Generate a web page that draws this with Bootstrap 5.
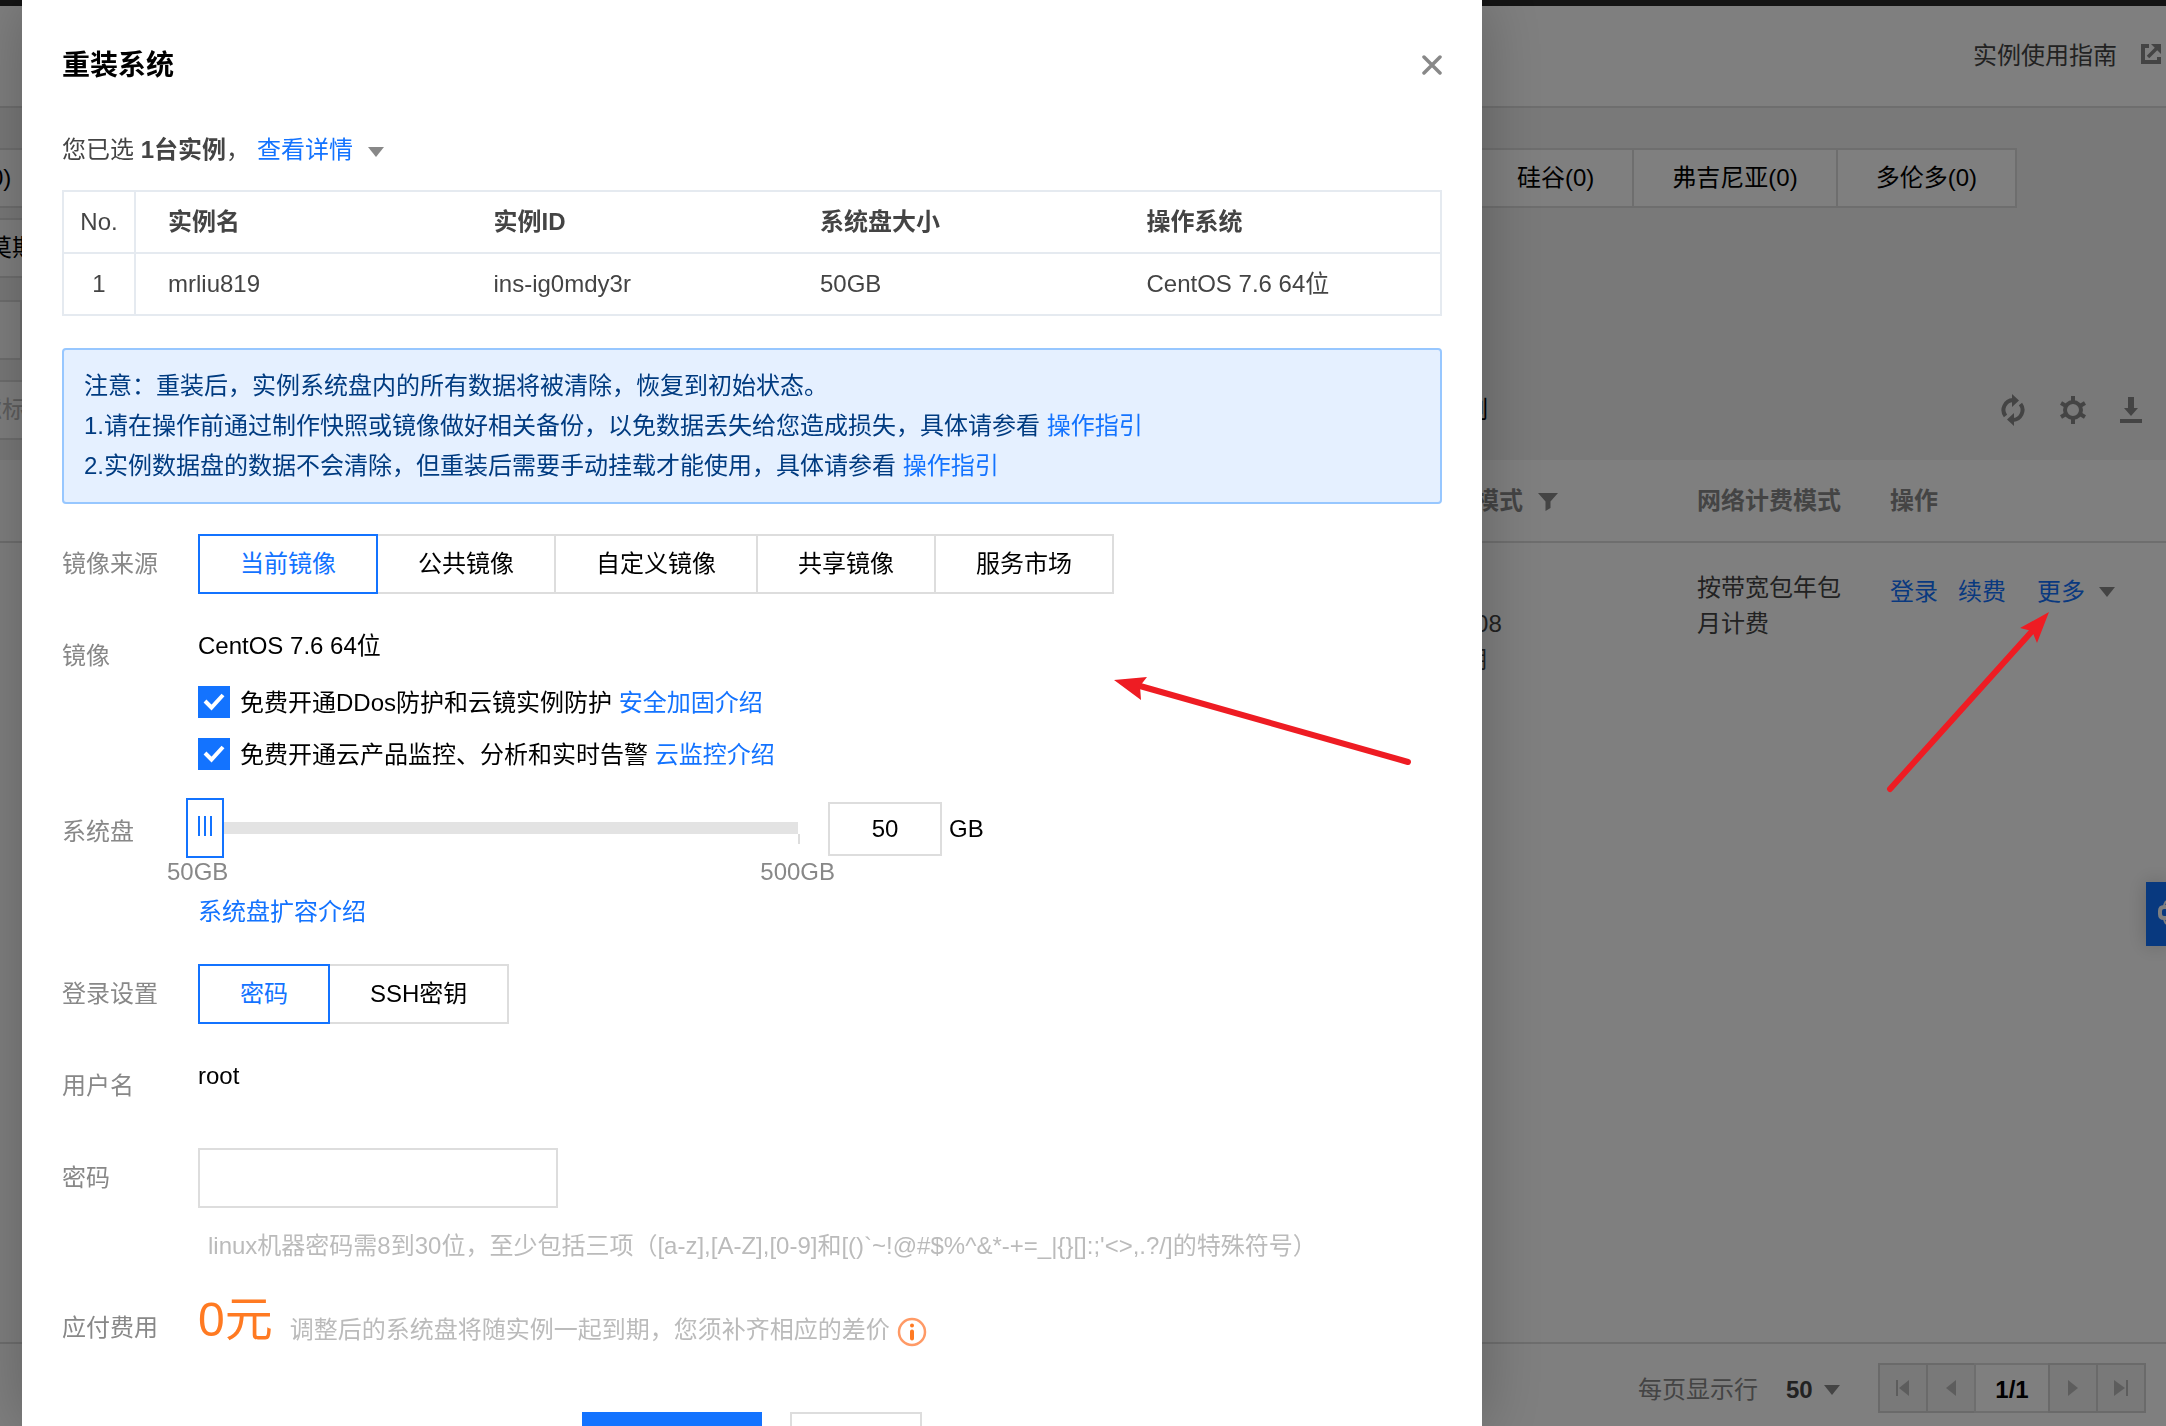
<!DOCTYPE html>
<html lang="zh-CN">
<head>
<meta charset="utf-8">
<meta name="viewport" content="width=device-width, initial-scale=1">
<title>重装系统</title>
<link rel="stylesheet" href="https://cdn.jsdelivr.net/npm/bootstrap@5.3.0/dist/css/bootstrap.min.css">
<style>
:root { --brand: #1373ff; --line: #ddd; }
body { font-family: "Liberation Sans", "Noto Sans CJK SC", sans-serif; font-size: 24px; line-height: 36px; color: #000; background: #fff; overflow: hidden; }
a { color: var(--brand); text-decoration: none; }
.btn, input, select { font-family: inherit; font-size: 24px; border-radius: 0; }
.caret-mark { display: inline-block; border: 8px solid transparent; border-top: 10px solid #888; border-bottom: 0; }

/* console page behind the dialog */
.console { height: 100vh; overflow: hidden; }
.console-bar { height: 6px; background: #282828; flex: none; }
.console-head { height: 102px; border-bottom: 2px solid var(--line); padding: 0 5px 0 0; color: #444; flex: none; }
.console-filters { background: #f2f2f2; padding: 40px 0 20px; flex: none; }
.opt-row { height: 60px; }
.opt { height: 60px; background: #fff; border: 2px solid var(--line); padding: 0 38px; color: #000; margin-left: -2px; white-space: nowrap; }
.regions { margin-right: 149px; }
.opt-zero { padding-left: 0; margin-left: -20px; }
.opt-city { padding-left: 0; margin-left: -14px; }
.opt-project { width: 24px; }
.search-box { height: 60px; border: 2px solid var(--line); padding: 0 2px; margin-left: -26px; width: 900px; background: #fff; }
.search-box::placeholder { color: #bbb; opacity: 1; }
.tool-set { width: 678px; padding-right: 24px; gap: 34px; }
.tool-set .btn { line-height: 0; }
.instances { table-layout: fixed; width: 100%; }
.instances th { height: 82px; padding: 0 20px; color: #888; border-bottom: 2px solid var(--line); }
.instances td { padding: 27px 20px; color: #444; vertical-align: top; }
.col-mode { width: 318px; } .col-net { width: 193px; } .col-ops { width: 296px; }
.console-foot { height: 84px; border-top: 2px solid var(--line); padding: 6px 20px 0; flex: none; color: #888; }
.foot-size { padding-top: 4px; }
.rows-select { appearance: none; border: 0; background: transparent; font-weight: bold; color: #444; padding: 0; width: 30px; }
.pager .btn { width: 50px; height: 50px; border: 2px solid #d4d4d4; background: #f2f2f2; padding: 0; margin-left: -2px; line-height: 0; }
.pager .page-now { width: 76px; border: 2px solid var(--line); padding-top: 4px; margin-left: -2px; background: #fff; color: #000; font-weight: bold; }
.side-tab { position: absolute; right: 0; top: 882px; width: 20px; height: 64px; background: #1073ff; box-shadow: 0 0 20px rgba(0,0,0,.2); overflow: hidden; }
.shade { position: fixed; inset: 0; background: rgba(0,0,0,.5); }

/* dialog */
.dialog { position: fixed; inset: 0 684px 0 22px; background: #fff; padding: 40px 40px 0; box-shadow: 0 0 60px rgba(0,0,0,.25); overflow: hidden; }
.dialog-title { font-size: 28px; line-height: 48px; font-weight: bold; margin: 0; padding-top: 2px; }
.picked { margin-top: 40px; line-height: 40px; color: #444; }
.picked-table { table-layout: fixed; width: 100%; margin-top: 20px; color: #444; border: 2px solid #e5eaf0; }
.picked-table th, .picked-table td { height: 62px; padding: 0 0 0 32px; border-bottom: 2px solid #e5eaf0; }
.picked-table .col-no { width: 72px; padding: 0; text-align: center; border-right: 2px solid #e5eaf0; font-weight: normal; }
.notice { margin-top: 32px; padding: 16px 20px; line-height: 40px; background: #e5f0ff; border: 2px solid #97c7ff; border-radius: 4px; color: #003b80; }
.setting-list { margin-top: 30px; gap: 32px; }
.setting-label { width: 136px; line-height: 60px; color: #888; flex: none; font-size: 24px; padding: 0; margin: 0; float: none; }
.plain-line { line-height: 40px; }
.seg .btn { height: 60px; padding: 0 40px; border: 2px solid var(--line); color: #000; background: #fff; margin-left: -2px; }
.seg .btn:first-child { margin-left: 0; }
.seg .btn.active { border-color: var(--brand); color: var(--brand); background: #fff; z-index: 1; position: relative; }
.tick-line { margin-top: 20px; height: 32px; gap: 10px; }
.tick-line span { padding-top: 2px; }
.tick-line .form-check-input { width: 32px; height: 32px; margin: 0; border: 0; border-radius: 0; background-color: var(--brand); background-size: 22px 22px; background-image: url("data:image/svg+xml,%3Csvg xmlns='http://www.w3.org/2000/svg' viewBox='0 0 22 22'%3E%3Cpath fill='none' stroke='%23fff' stroke-width='4' d='M2 10l6.500 6.500L20 4'/%3E%3C/svg%3E"); }
.disk-scale { width: 612px; margin-left: -12px; height: 54px; position: relative; }
.disk-range { appearance: none; width: 100%; height: 52px; margin: 0; background: transparent; display: block; }
.disk-range::-webkit-slider-runnable-track { height: 12px; background: #e3e3e3; }
.disk-range::-webkit-slider-thumb { appearance: none; width: 38px; height: 60px; margin-top: -24px; border: 2px solid var(--brand); border-radius: 0;
  background: repeating-linear-gradient(90deg, var(--brand) 0 2px, #fff 2px 6px) center 16px / 14px 20px no-repeat #fff; }
.disk-end { position: absolute; right: -2px; top: 32px; width: 2px; height: 10px; background: var(--line); }
.disk-size { width: 114px; height: 54px; margin-left: 30px; border: 2px solid var(--line); text-align: center; }
.disk-ends { width: 668px; margin-left: -31px; line-height: 32px; color: #888; }
.disk-more { line-height: 40px; margin-top: 4px; }
.pass-box { width: 360px; height: 60px; border: 2px solid var(--line); display: block; }
.hint { color: #bbb; }
.pass-hint { margin: 20px 0 0 10px; }
.fee { font-size: 48px; color: #ff7a22; line-height: 48px; }
.fee-row .setting-label { padding-top: 2px; margin-bottom: -2px; }
.fee-row .hint { padding-top: 2px; }
.fee-icon { align-self: center; margin-top: 11px; }
.dialog-foot { margin-top: 56px; gap: 28px; }
.dialog-foot .btn { height: 60px; padding: 0 40px; border: 2px solid var(--line); background: #fff; }
.dialog-foot .btn-main { background: var(--brand); border-color: var(--brand); color: #fff; }
.arrow-note { position: fixed; pointer-events: none; }
.arrow-image { left: 1110px; top: 670px; }
.arrow-more { left: 1880px; top: 606px; }
</style>
<script src="https://cdn.jsdelivr.net/npm/bootstrap@5.3.0/dist/js/bootstrap.bundle.min.js"></script>
</head>
<body>
<div class="console d-flex flex-column position-relative">
  <div class="console-bar"></div>
  <header class="console-head d-flex justify-content-end align-items-center">
    <a href="#" class="d-flex align-items-center text-reset">实例使用指南
      <svg class="ms-4 mb-1" width="20" height="20" viewBox="0 0 20 20" fill="none" stroke="#888" stroke-width="4"><path d="M8 2H2v16h16v-5"/><path d="M7 13L16 4" stroke-width="3.500"/><path d="M10 0h10v10z" fill="#888" stroke="none"/></svg>
    </a>
  </header>
  <section class="console-filters">
    <div class="regions opt-row d-flex">
      <button class="btn opt opt-zero">(0)</button>
      <div class="opt flex-grow-1"></div>
      <button class="btn opt">硅谷(0)</button>
      <button class="btn opt">弗吉尼亚(0)</button>
      <button class="btn opt">多伦多(0)</button>
    </div>
    <div class="opt-row d-flex" style="margin-top:10px"><button class="btn opt opt-city">莫斯科(0)</button></div>
    <div class="opt-row d-flex" style="margin-top:22px"><div class="opt opt-project p-0"></div></div>
    <div class="opt-row d-flex align-items-center" style="margin-top:20px">
      <input class="search-box" type="text" aria-label="搜索实例" placeholder="滤标签用回车键分隔">
      <span class="ms-auto">待回收实例</span>
      <div class="tool-set d-flex justify-content-end align-items-center">
        <button class="btn p-0 border-0" aria-label="刷新"><svg width="26" height="32" viewBox="0 0 26 32"><g fill="none" stroke="#888" stroke-width="4"><path d="M5.500 22A10 10 0 0 1 13 6"/><path d="M20.500 10A10 10 0 0 1 13 26"/></g><path fill="#888" d="M12 0l7 6.500-7 6.500zM14 19v13l-7-6.500z"/></svg></button>
        <button class="btn p-0 border-0" aria-label="设置"><svg width="26" height="28" viewBox="0 0 26 28"><circle cx="13" cy="14" r="8" fill="none" stroke="#888" stroke-width="4"/><path stroke="#888" stroke-width="4" d="M13 0v6M13 22v6M1 7l5 3M20 18l5 3M1 21l5-3M20 10l5-3"/></svg></button>
        <button class="btn p-0 border-0" aria-label="下载"><svg width="22" height="26" viewBox="0 0 22 26" fill="#888"><path d="M8 0h6v11h4l-7 8-7-8h4zM0 22h22v4H0z"/></svg></button>
      </div>
    </div>
  </section>
  <section class="flex-grow-1">
    <table class="instances">
      <colgroup><col><col class="col-mode"><col class="col-net"><col class="col-ops"></colgroup>
      <thead><tr><th></th><th>实例计费模式 <svg class="ms-2" width="20" height="18" viewBox="0 0 20 18" fill="#888"><path d="M0 0h20l-7.500 8.500V15L7.500 18V8.500z"/></svg></th><th>网络计费模式</th><th>操作</th></tr></thead>
      <tbody><tr><td></td><td>包年包月<br>2021-03-08<br>23:59到期</td><td>按带宽包年包月计费</td>
        <td><div class="d-flex align-items-center pt-1"><a href="#">登录</a><a href="#" style="margin-left:20px">续费</a><a href="#" style="margin-left:31px">更多</a><span class="caret-mark" style="margin-left:14px"></span></div></td></tr></tbody>
    </table>
  </section>
  <footer class="console-foot d-flex justify-content-end align-items-center">
    <div class="foot-size d-flex align-items-center">
    <label for="rows">每页显示行</label>
    <select id="rows" class="rows-select" style="margin-left:28px"><option>50</option></select>
    <span class="caret-mark" style="margin-left:8px"></span>
    </div>
    <div class="pager d-flex" style="margin-left:40px">
      <button class="btn" aria-label="首页"><svg width="14" height="16" viewBox="0 0 14 16" fill="#bbb"><path d="M0 0h2v16H0zM13 0v16L3 8z"/></svg></button>
      <button class="btn" aria-label="上一页"><svg width="10" height="16" viewBox="0 0 10 16" fill="#bbb"><path d="M10 0v16L0 8z"/></svg></button>
      <span class="page-now d-flex align-items-center justify-content-center">1/1</span>
      <button class="btn" aria-label="下一页"><svg width="10" height="16" viewBox="0 0 10 16" fill="#bbb"><path d="M0 0v16l10-8z"/></svg></button>
      <button class="btn" aria-label="末页"><svg width="14" height="16" viewBox="0 0 14 16" fill="#bbb"><path d="M12 0h2v16h-2zM0 0v16l11-8z"/></svg></button>
    </div>
  </footer>
  <div class="side-tab"><svg width="20" height="64" viewBox="0 0 20 64" fill="none" stroke="#fff" stroke-width="4"><path d="M20 36h-2q-4 0-4-4v-3q0-4 4-4h2"/><path d="M20 19q-2 3-2 6M20 42q-2-3-2-6" stroke-width="2"/></svg></div>
</div>
<div class="shade"></div>

<main class="dialog" role="dialog" aria-labelledby="dlg-title">
  <div class="d-flex justify-content-between align-items-center">
    <h1 class="dialog-title" id="dlg-title">重装系统</h1>
    <button class="btn p-0 border-0 d-flex" aria-label="关闭"><svg width="20" height="20" viewBox="0 0 20 20" stroke="#888" stroke-width="3.500" stroke-linecap="round"><path d="M2 2l16 16M18 2L2 18"/></svg></button>
  </div>
  <div class="picked d-flex align-items-center">
    <span>您已选 <strong>1台实例</strong>，</span>
    <a href="#" style="margin-left:7px">查看详情</a>
    <span class="caret-mark mt-1" style="margin-left:15px"></span>
  </div>
  <table class="picked-table">
    <thead><tr><th class="col-no">No.</th><th>实例名</th><th>实例ID</th><th>系统盘大小</th><th>操作系统</th></tr></thead>
    <tbody><tr><td class="col-no">1</td><td>mrliu819</td><td>ins-ig0mdy3r</td><td>50GB</td><td>CentOS 7.6 64位</td></tr></tbody>
  </table>
  <div class="notice">
    <div>注意：重装后，实例系统盘内的所有数据将被清除，恢复到初始状态。</div>
    <div>1.请在操作前通过制作快照或镜像做好相关备份，以免数据丢失给您造成损失，具体请参看 <a href="#">操作指引</a></div>
    <div>2.实例数据盘的数据不会清除，但重装后需要手动挂载才能使用，具体请参看 <a href="#">操作指引</a></div>
  </div>

  <form class="setting-list d-flex flex-column">
    <div class="d-flex">
      <div class="setting-label">镜像来源</div>
      <div class="seg d-flex">
        <button type="button" class="btn active">当前镜像</button><button type="button" class="btn">公共镜像</button><button type="button" class="btn">自定义镜像</button><button type="button" class="btn">共享镜像</button><button type="button" class="btn">服务市场</button>
      </div>
    </div>
    <div class="d-flex">
      <div class="setting-label">镜像</div>
      <div>
        <div class="plain-line">CentOS 7.6 64位</div>
        <div class="tick-line d-flex align-items-center"><input class="form-check-input" type="checkbox" id="ddos" checked><span><label for="ddos">免费开通DDos防护和云镜实例防护</label> <a href="#">安全加固介绍</a></span></div>
        <div class="tick-line d-flex align-items-center"><input class="form-check-input" type="checkbox" id="monitor" checked><span><label for="monitor">免费开通云产品监控、分析和实时告警</label> <a href="#">云监控介绍</a></span></div>
      </div>
    </div>
    <div class="d-flex">
      <label class="setting-label" for="disk">系统盘</label>
      <div>
        <div class="d-flex align-items-center">
          <div class="disk-scale"><input class="disk-range" id="disk" type="range" min="50" max="500" value="50"><span class="disk-end"></span></div>
          <input class="disk-size" type="text" value="50" aria-label="系统盘大小">
          <span style="margin-left:7px">GB</span>
        </div>
        <div class="disk-ends d-flex justify-content-between"><span>50GB</span><span>500GB</span></div>
        <div class="disk-more"><a href="#">系统盘扩容介绍</a></div>
      </div>
    </div>
    <div class="d-flex">
      <div class="setting-label">登录设置</div>
      <div class="seg d-flex"><button type="button" class="btn active">密码</button><button type="button" class="btn">SSH密钥</button></div>
    </div>
    <div class="d-flex">
      <div class="setting-label">用户名</div>
      <div class="plain-line">root</div>
    </div>
    <div class="d-flex">
      <label class="setting-label" for="pass">密码</label>
      <div>
        <input class="pass-box" id="pass" type="password">
        <div class="hint pass-hint">linux机器密码需8到30位，至少包括三项（[a-z],[A-Z],[0-9]和[()`~!@#$%^&amp;*-+=_|{}[]:;'&lt;&gt;,.?/]的特殊符号）</div>
      </div>
    </div>
    <div class="fee-row d-flex">
      <div class="setting-label">应付费用</div>
      <div class="d-flex">
        <span class="fee">0元</span>
        <span class="hint" style="margin:14px 0 0 17px">调整后的系统盘将随实例一起到期，您须补齐相应的差价</span>
        <svg class="fee-icon" style="margin-left:7px" width="30" height="30" viewBox="0 0 30 30"><circle cx="15" cy="15" r="13" fill="none" stroke="#ff9a66" stroke-width="2.500"/><path stroke="#ff7a22" stroke-width="4" stroke-linecap="round" d="M15 14.500v7M15 8.500v.1"/></svg>
      </div>
    </div>
  </form>
  <div class="dialog-foot d-flex justify-content-center">
    <button class="btn btn-main">开始重装</button>
    <button class="btn">取消</button>
  </div>
</main>

<svg class="arrow-note arrow-image" width="310" height="100" viewBox="0 0 310 100"><path d="M30 16L298 92" stroke="#ee1c23" stroke-width="6" stroke-linecap="round"/><path fill="#ee1c23" d="M4 10l33-3-7 9 1 14z"/></svg>
<svg class="arrow-note arrow-more" width="180" height="190" viewBox="0 0 180 190"><path d="M154 23L10 183" stroke="#ee1c23" stroke-width="6" stroke-linecap="round"/><path fill="#ee1c23" d="M169 6l-29 16 12 3 5 12z"/></svg>
</body>
</html>
